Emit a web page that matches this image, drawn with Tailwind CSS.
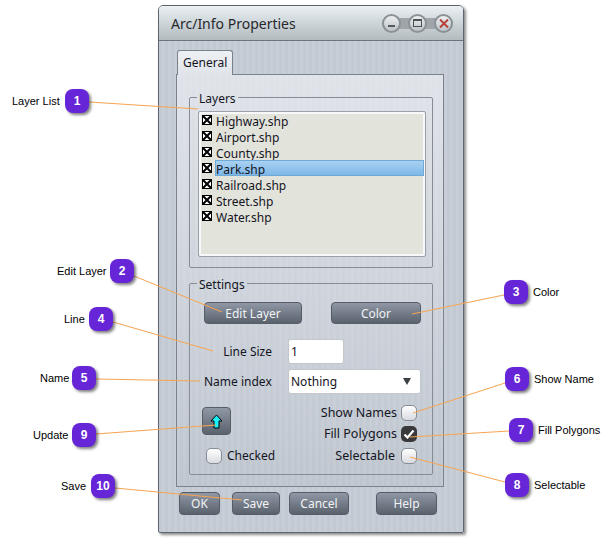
<!DOCTYPE html>
<html lang="en">
<head>
<meta charset="UTF-8">
<title>Arc/Info Properties</title>
<script src="https://cdn.jsdelivr.net/npm/@tailwindcss/browser@4"></script>
</head>
<body class="bg-white w-[613px] h-[542px] overflow-hidden relative font-['Noto_Sans',sans-serif] text-[12px] text-[#14141f]">

<!-- Window -->
<div class="absolute left-[158px] top-[5px] w-[306px] h-[528px] rounded-t-[5px] rounded-b-[2px] border border-[#5d6670] shadow-[2px_2px_3px_rgba(0,0,0,0.45)] flex flex-col bg-[repeating-linear-gradient(90deg,#c2c9d2_0px,#c2c9d2_3px,#c8ced7_3px,#c8ced7_6px)]">
    <!-- Title bar -->
    <div class="h-[35px] shrink-0 rounded-t-[4px] border-b border-[#6c747e] bg-gradient-to-b from-[#eaf0f3] to-[#b3bbbf] flex items-center justify-between pl-[12px] pr-[10px]">
        <span class="text-[14px] text-[#26282c]">Arc/Info Properties</span>
        <div class="flex items-center bg-[#9fa5aa] rounded-full h-[11px]">
            <div class="w-[19px] h-[19px] rounded-full border-2 border-[#8b9297] bg-gradient-to-b from-[#eef0f1] to-[#bcc2c6] flex items-center justify-center">
                <div class="w-[7px] h-[2px] bg-[#555a5e] mt-[6px]"></div>
            </div>
            <div class="w-[19px] h-[19px] rounded-full border-2 border-[#8b9297] bg-gradient-to-b from-[#eef0f1] to-[#bcc2c6] ml-[7px] flex items-center justify-center">
                <div class="w-[9px] h-[8px] border border-t-2 border-[#4c5155]"></div>
            </div>
            <div class="w-[19px] h-[19px] rounded-full border-2 border-[#8b9297] bg-gradient-to-b from-[#eef0f1] to-[#bcc2c6] ml-[7px] flex items-center justify-center">
                <svg width="10" height="9" viewBox="0 0 10 9"><path d="M1 0.5l8 8M9 0.5l-8 8" stroke="#b5403c" stroke-width="2"/></svg>
            </div>
        </div>
    </div>

    <!-- Tab -->
    <div class="pl-[18px] pt-[9px] shrink-0 relative z-10">
        <div class="w-[56px] h-[25px] border border-b-0 border-[#7a828c] rounded-t-[3px] bg-gradient-to-b from-[#eef1f4] to-[#e0e4ea] pl-[5px] leading-[23px] -mb-px">General</div>
    </div>

    <!-- Pane -->
    <div class="ml-[17px] w-[268px] h-[413px] shrink-0 border border-[#7a828c] bg-[image:repeating-linear-gradient(90deg,rgba(255,255,255,0.07)_0px,rgba(255,255,255,0.07)_3px,transparent_3px,transparent_6px),linear-gradient(#dfe3e9,#bec5ce)] px-[12px] pt-[15px] flex flex-col">
        <!-- Layers group -->
        <fieldset class="w-[244px] h-[178px] shrink-0 border border-[#868d96] rounded-[2px] pl-[8px] pt-[7px]">
            <legend class="px-[2px] -ml-px leading-[17px] h-[14px]">Layers</legend>
            <div class="w-[228px] h-[146px] border border-[#9aa0a8] shadow-[inset_0_0_0_2px_#f7f8f9] rounded-[2px] bg-[#e2e3da] pl-[3px] pr-px">
                <div class="flex h-[16px]">
                    <svg class="mt-[3px] mr-[3px] shrink-0" width="10" height="10" viewBox="0 0 10 10"><rect width="10" height="10" fill="#000"/><rect x="1" y="1" width="8" height="8" fill="#fff"/><path d="M1 1l8 8M9 1l-8 8" stroke="#000" stroke-width="2"/></svg>
                    <span class="pl-px leading-[20px]">Highway.shp</span>
                </div>
                <div class="flex h-[16px]">
                    <svg class="mt-[3px] mr-[3px] shrink-0" width="10" height="10" viewBox="0 0 10 10"><rect width="10" height="10" fill="#000"/><rect x="1" y="1" width="8" height="8" fill="#fff"/><path d="M1 1l8 8M9 1l-8 8" stroke="#000" stroke-width="2"/></svg>
                    <span class="pl-px leading-[20px]">Airport.shp</span>
                </div>
                <div class="flex h-[16px]">
                    <svg class="mt-[3px] mr-[3px] shrink-0" width="10" height="10" viewBox="0 0 10 10"><rect width="10" height="10" fill="#000"/><rect x="1" y="1" width="8" height="8" fill="#fff"/><path d="M1 1l8 8M9 1l-8 8" stroke="#000" stroke-width="2"/></svg>
                    <span class="pl-px leading-[20px]">County.shp</span>
                </div>
                <div class="flex h-[16px]">
                    <svg class="mt-[3px] mr-[3px] shrink-0" width="10" height="10" viewBox="0 0 10 10"><rect width="10" height="10" fill="#000"/><rect x="1" y="1" width="8" height="8" fill="#fff"/><path d="M1 1l8 8M9 1l-8 8" stroke="#000" stroke-width="2"/></svg>
                    <span class="flex-1 border border-[#6fa9d8] bg-gradient-to-b from-[#a9d1f1] to-[#7db8e8] leading-[18px]">Park.shp</span>
                </div>
                <div class="flex h-[16px]">
                    <svg class="mt-[3px] mr-[3px] shrink-0" width="10" height="10" viewBox="0 0 10 10"><rect width="10" height="10" fill="#000"/><rect x="1" y="1" width="8" height="8" fill="#fff"/><path d="M1 1l8 8M9 1l-8 8" stroke="#000" stroke-width="2"/></svg>
                    <span class="pl-px leading-[20px]">Railroad.shp</span>
                </div>
                <div class="flex h-[16px]">
                    <svg class="mt-[3px] mr-[3px] shrink-0" width="10" height="10" viewBox="0 0 10 10"><rect width="10" height="10" fill="#000"/><rect x="1" y="1" width="8" height="8" fill="#fff"/><path d="M1 1l8 8M9 1l-8 8" stroke="#000" stroke-width="2"/></svg>
                    <span class="pl-px leading-[20px]">Street.shp</span>
                </div>
                <div class="flex h-[16px]">
                    <svg class="mt-[3px] mr-[3px] shrink-0" width="10" height="10" viewBox="0 0 10 10"><rect width="10" height="10" fill="#000"/><rect x="1" y="1" width="8" height="8" fill="#fff"/><path d="M1 1l8 8M9 1l-8 8" stroke="#000" stroke-width="2"/></svg>
                    <span class="pl-px leading-[20px]">Water.shp</span>
                </div>
            </div>
        </fieldset>

        <!-- Settings group -->
        <fieldset class="w-[244px] h-[199px] shrink-0 mt-[8px] border border-[#868d96] rounded-[2px] pl-[14px] pr-[11px] pt-[12px]">
            <legend class="px-[2px] -ml-[7px] leading-[17px] h-[14px]">Settings</legend>
            <div class="flex justify-between">
                <button class="w-[98px] h-[22px] pt-[2px] rounded-[4px] border border-[#565d67] bg-gradient-to-b from-[#8f98a4] to-[#5a626e] text-[#f1f3f5]">Edit Layer</button>
                <button class="w-[90px] h-[22px] pt-[2px] rounded-[4px] border border-[#565d67] bg-gradient-to-b from-[#8f98a4] to-[#5a626e] text-[#f1f3f5]">Color</button>
            </div>
            <div class="flex items-center mt-[15px]">
                <span class="w-[68px] text-right">Line Size</span>
                <input class="ml-[16px] w-[56px] h-[25px] rounded-[3px] border border-[#c3c7cc] bg-white pl-[2px] text-[#14141f]" value="1">
            </div>
            <div class="flex items-center mt-[5px]">
                <span class="w-[70px]">Name index</span>
                <div class="ml-[14px] w-[133px] h-[25px] rounded-[3px] border border-[#c3c7cc] bg-white pl-[2px] flex items-center justify-between pr-[9px]">
                    <span>Nothing</span>
                    <svg width="8" height="7" viewBox="0 0 8 7"><path d="M0 0h8L4 7z" fill="#3b3e42"/></svg>
                </div>
            </div>
            <div class="flex justify-between mt-[11px] -ml-[2px] pr-[4px]">
                <div class="flex flex-col pt-[2px]">
                    <button class="w-[29px] h-[28px] rounded-[4px] border border-[#565d67] bg-gradient-to-b from-[#8f98a4] to-[#5a626e] flex items-center justify-center">
                        <svg width="13" height="15" viewBox="0 0 13 15"><path d="M6.5 1L12 7H9v7H4V7H1z" fill="#19f2fa" stroke="#000" stroke-width="1" stroke-linejoin="miter"/></svg>
                    </button>
                    <div class="flex items-center mt-[12px] ml-[4px]">
                        <span class="w-[16px] h-[16px] rounded-[5px] border border-[#868d96] bg-gradient-to-b from-white to-[#d9dbe0]"></span>
                        <span class="ml-[5px]">Checked</span>
                    </div>
                </div>
                <div class="flex flex-col items-end text-[12.5px]">
                    <div class="flex items-center h-[16px]">
                        <span class="mr-[4px]">Show Names</span>
                        <span class="w-[16px] h-[16px] rounded-[5px] border border-[#868d96] bg-gradient-to-b from-white to-[#d9dbe0]"></span>
                    </div>
                    <div class="flex items-center h-[16px] mt-[5px]">
                        <span class="mr-[4px]">Fill Polygons</span>
                        <span class="w-[16px] h-[16px] rounded-[5px] bg-[#3a3a3c] flex items-center justify-center">
                            <svg width="12" height="10" viewBox="0 0 12 10"><path d="M1.5 5.5L4.5 8.5L10.5 1.5" fill="none" stroke="#fff" stroke-width="2.2"/></svg>
                        </span>
                    </div>
                    <div class="flex items-center h-[16px] mt-[6px]">
                        <span class="mr-[6px]">Selectable</span>
                        <span class="w-[16px] h-[16px] rounded-[5px] border border-[#868d96] bg-gradient-to-b from-white to-[#d9dbe0]"></span>
                    </div>
                </div>
            </div>
        </fieldset>
    </div>

    <!-- Bottom buttons -->
    <div class="flex mt-[5px] ml-[20px]">
        <button class="w-[41px] h-[23px] rounded-[4px] border border-[#565d67] bg-gradient-to-b from-[#8f98a4] to-[#5a626e] text-[#f1f3f5]">OK</button>
        <button class="w-[48px] h-[23px] ml-[12px] rounded-[4px] border border-[#565d67] bg-gradient-to-b from-[#8f98a4] to-[#5a626e] text-[#f1f3f5]">Save</button>
        <button class="w-[60px] h-[23px] ml-[9px] rounded-[4px] border border-[#565d67] bg-gradient-to-b from-[#8f98a4] to-[#5a626e] text-[#f1f3f5]">Cancel</button>
        <button class="w-[61px] h-[23px] ml-[27px] rounded-[4px] border border-[#565d67] bg-gradient-to-b from-[#8f98a4] to-[#5a626e] text-[#f1f3f5]">Help</button>
    </div>
</div>

<!-- Callout lines -->
<svg class="absolute left-0 top-0 pointer-events-none" width="613" height="542" viewBox="0 0 613 542">
    <g stroke="#f8a450" stroke-width="1" fill="none">
        <path d="M89 102L198 109"/>
        <path d="M134 276L222 312"/>
        <path d="M504 295L412 314"/>
        <path d="M113 322L213 351"/>
        <path d="M96 379L200 381"/>
        <path d="M505 383L413 413"/>
        <path d="M509 431L410 437"/>
        <path d="M505 482L410 457"/>
        <path d="M96 434L216 425"/>
        <path d="M115 488L242 500"/>
    </g>
</svg>

<!-- Callout labels and badges -->
<div class="font-['Liberation_Sans',sans-serif] text-black text-[11px]">
    <span class="absolute left-[12px] top-[93px] leading-[16px]">Layer List</span>
    <span class="absolute left-[65px] top-[89px] w-[24px] h-[24px] rounded-[8px] bg-[#6625d7] shadow-[2px_2px_3px_rgba(0,0,0,0.5)] text-white text-[12px] font-bold flex items-center justify-center">1</span>
    <span class="absolute left-[57px] top-[263px] leading-[16px]">Edit Layer</span>
    <span class="absolute left-[110px] top-[259px] w-[24px] h-[24px] rounded-[8px] bg-[#6625d7] shadow-[2px_2px_3px_rgba(0,0,0,0.5)] text-white text-[12px] font-bold flex items-center justify-center">2</span>
    <span class="absolute left-[504px] top-[280px] w-[24px] h-[24px] rounded-[8px] bg-[#6625d7] shadow-[2px_2px_3px_rgba(0,0,0,0.5)] text-white text-[12px] font-bold flex items-center justify-center">3</span>
    <span class="absolute left-[533px] top-[284px] leading-[16px]">Color</span>
    <span class="absolute left-[64px] top-[311px] leading-[16px]">Line</span>
    <span class="absolute left-[89px] top-[307px] w-[24px] h-[24px] rounded-[8px] bg-[#6625d7] shadow-[2px_2px_3px_rgba(0,0,0,0.5)] text-white text-[12px] font-bold flex items-center justify-center">4</span>
    <span class="absolute left-[40px] top-[370px] leading-[16px]">Name</span>
    <span class="absolute left-[72px] top-[366px] w-[24px] h-[24px] rounded-[8px] bg-[#6625d7] shadow-[2px_2px_3px_rgba(0,0,0,0.5)] text-white text-[12px] font-bold flex items-center justify-center">5</span>
    <span class="absolute left-[505px] top-[367px] w-[24px] h-[24px] rounded-[8px] bg-[#6625d7] shadow-[2px_2px_3px_rgba(0,0,0,0.5)] text-white text-[12px] font-bold flex items-center justify-center">6</span>
    <span class="absolute left-[534px] top-[371px] leading-[16px]">Show Name</span>
    <span class="absolute left-[509px] top-[418px] w-[24px] h-[24px] rounded-[8px] bg-[#6625d7] shadow-[2px_2px_3px_rgba(0,0,0,0.5)] text-white text-[12px] font-bold flex items-center justify-center">7</span>
    <span class="absolute left-[538px] top-[422px] leading-[16px]">Fill Polygons</span>
    <span class="absolute left-[505px] top-[473px] w-[24px] h-[24px] rounded-[8px] bg-[#6625d7] shadow-[2px_2px_3px_rgba(0,0,0,0.5)] text-white text-[12px] font-bold flex items-center justify-center">8</span>
    <span class="absolute left-[534px] top-[477px] leading-[16px]">Selectable</span>
    <span class="absolute left-[33px] top-[427px] leading-[16px]">Update</span>
    <span class="absolute left-[72px] top-[423px] w-[24px] h-[24px] rounded-[8px] bg-[#6625d7] shadow-[2px_2px_3px_rgba(0,0,0,0.5)] text-white text-[12px] font-bold flex items-center justify-center">9</span>
    <span class="absolute left-[61px] top-[478px] leading-[16px]">Save</span>
    <span class="absolute left-[91px] top-[474px] w-[24px] h-[24px] rounded-[8px] bg-[#6625d7] shadow-[2px_2px_3px_rgba(0,0,0,0.5)] text-white text-[12px] font-bold flex items-center justify-center">10</span>
</div>
</body>
</html>
